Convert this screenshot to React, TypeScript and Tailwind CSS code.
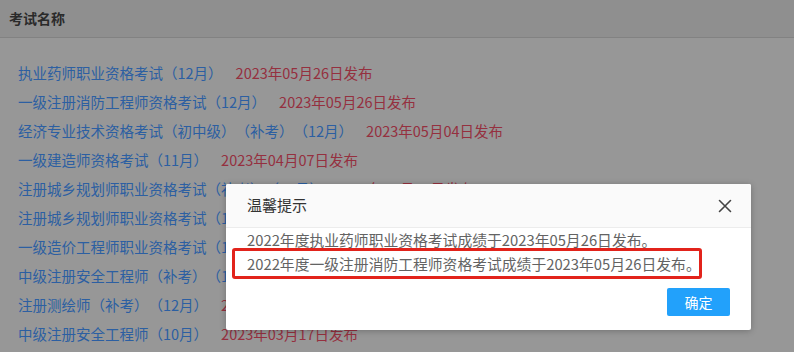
import React from 'react';

type Exam = { name: string; date: string };

const EXAMS: Exam[] = [
  { name: '执业药师职业资格考试（12月）', date: '2023年05月26日发布' },
  { name: '一级注册消防工程师资格考试（12月）', date: '2023年05月26日发布' },
  { name: '经济专业技术资格考试（初中级）（补考）（12月）', date: '2023年05月04日发布' },
  { name: '一级建造师资格考试（11月）', date: '2023年04月07日发布' },
  { name: '注册城乡规划师职业资格考试（补考）（12月）', date: '2023年03月23日发布' },
  { name: '注册城乡规划师职业资格考试（12月）', date: '2023年03月23日发布' },
  { name: '一级造价工程师职业资格考试（12月）', date: '2023年03月22日发布' },
  { name: '中级注册安全工程师（补考）（12月）', date: '2023年03月17日发布' },
  { name: '注册测绘师（补考）（12月）', date: '2023年03月17日发布' },
  { name: '中级注册安全工程师（10月）', date: '2023年03月17日发布' },
];

const font = { fontFamily: '"Microsoft YaHei", "Noto Sans CJK SC", "Noto Sans", sans-serif' };

export default function App() {
  return (
    <div className="relative w-[794px] h-[352px] overflow-hidden bg-[#979797] [text-spacing-trim:space-all]" style={font}>
      <div className="h-[38px] bg-[#8f8f8f] border-b border-[#828282] flex items-center pl-[9px]">
        <span className="text-[14px] font-bold text-[#2a2a2a]">考试名称</span>
      </div>

      <ul className="pt-[20px] pl-[18px]">
        {EXAMS.map((e) => (
          <li key={e.name} className="h-[29px] flex items-center text-[14.5px] whitespace-nowrap">
            <span className="text-[#2c5fa2]">{e.name}</span>
            <span className="ml-[13px] text-[#95303f]">{e.date}</span>
          </li>
        ))}
      </ul>

      {/* dialog */}
      <div className="absolute left-[226px] top-[184px] w-[525px] h-[146px] bg-white rounded-[2px] shadow-[0_1px_6px_rgba(0,0,0,0.25)] flex flex-col">
        <div className="h-[44px] bg-[#fafafa] border-b border-[#ececec] flex items-center justify-between pl-[21px] pr-[19px] rounded-t-[2px]">
          <span className="text-[15px] text-[#333]">温馨提示</span>
          <svg width="14" height="14" viewBox="0 0 14 14">
            <path d="M1.5 1.5 L12.5 12.5 M12.5 1.5 L1.5 12.5" stroke="#444" strokeWidth="1.6" strokeLinecap="round" />
          </svg>
        </div>
        <div className="relative pl-[21px] text-[14.8px] leading-[24px] text-[#636363] whitespace-nowrap">
          <p>2022年度执业药师职业资格考试成绩于2023年05月26日发布。</p>
          <p>2022年度一级注册消防工程师资格考试成绩于2023年05月26日发布。</p>
          <div className="absolute left-[6px] top-[20px] w-[470px] h-[31px] border-[3px] border-[#e2231b] rounded-[3px]" />
        </div>
        <div className="flex justify-end pr-[21px] mt-[12px]">
          <button className="w-[63px] h-[28px] bg-[#22a1fb] text-white text-[14px] rounded-[2px]">确定</button>
        </div>
      </div>
    </div>
  );
}
